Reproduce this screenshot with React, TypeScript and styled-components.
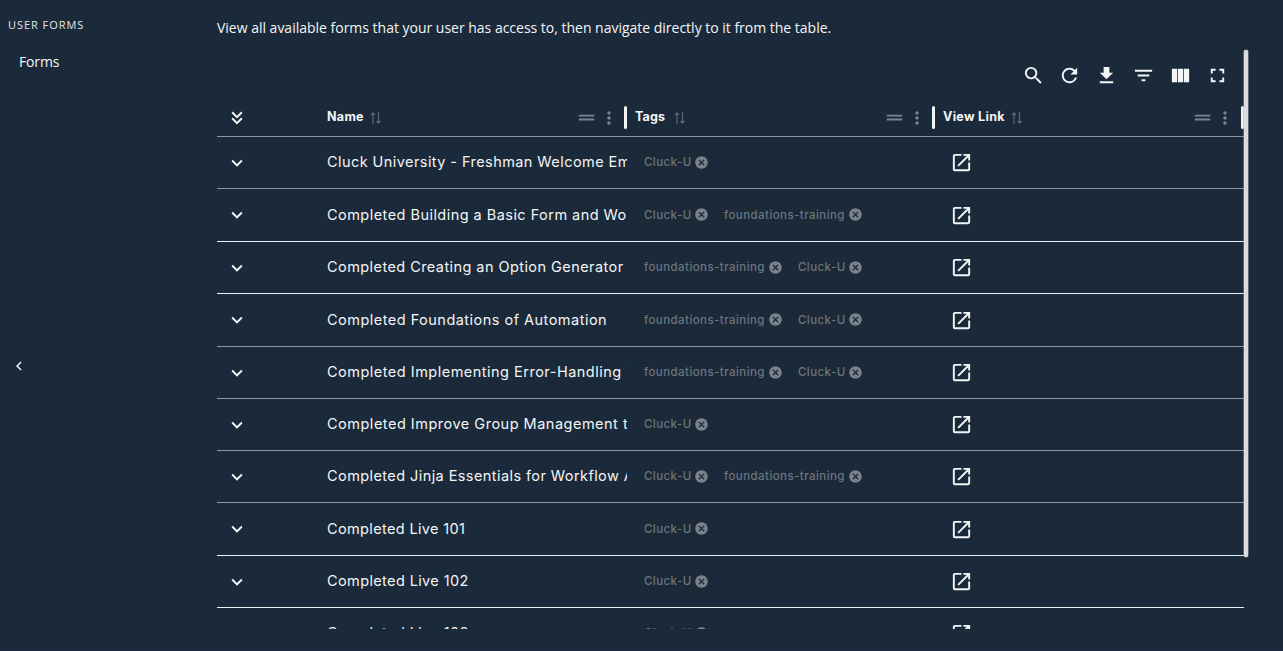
import React from "react";
import styled, { createGlobalStyle } from "styled-components";
import {
  MdSearch, MdRefresh, MdGetApp, MdFilterList, MdFullscreen,
  MdDragHandle, MdMoreVert, MdExpandMore, MdKeyboardDoubleArrowDown,
  MdOpenInNew, MdCancel, MdChevronLeft,
} from "react-icons/md";

const Global = createGlobalStyle`
  * { box-sizing: border-box; }
  body { margin: 0; background: #1b2a3a; color: #f4f5f6; font-family: "Inter", sans-serif; overflow: hidden; }
  svg { display: block; flex: none; }
`;

const Page = styled.div`
  display: flex;
  width: 1283px;
  height: 651px;
  border-bottom: 2px solid #1c2940;
`;

const Sidebar = styled.aside`
  width: 217px;
  display: flex;
  flex-direction: column;
  font-family: "Open Sans", sans-serif;
`;

const SidebarTitle = styled.div`
  margin: 16px 0 0 8px;
  font-size: 11px;
  line-height: 18px;
  letter-spacing: 0.95px;
  color: #e3e5e7;
`;

const SidebarItem = styled.div`
  margin: 17px 0 0 19px;
  font-size: 14px;
  line-height: 22px;
  letter-spacing: -0.15px;
`;

const Collapse = styled.div`
  margin: 284px 0 0 10px;
  font-size: 18px;
`;

const Main = styled.main`
  width: 1032px;
  display: flex;
  flex-direction: column;
`;

const Intro = styled.p`
  margin: 17px 0 0;
  font-family: "Open Sans", sans-serif;
  font-size: 14px;
  line-height: 22px;
  letter-spacing: -0.01px;
  white-space: nowrap;
`;

const Panel = styled.div`
  display: flex;
  margin-top: 10px;
  height: 580px;
`;

const Table = styled.div`
  width: 1027px;
  height: 580px;
  overflow: hidden;
`;

const ScrollThumb = styled.div`
  width: 4px;
  height: 507px;
  margin: 1px 0 0 -0.5px;
  border-radius: 2px;
  background: #dddbdd;
  box-shadow: 0 0 0 0.5px #9aa0a6;
`;

const Toolbar = styled.div`
  height: 50px;
  padding: 2px 15px 0 0;
  display: flex;
  justify-content: flex-end;
  align-items: center;
  gap: 13.9px;
  font-size: 23px;
`;

const grid = `
  display: grid;
  grid-template-columns: 110px 308px 308px 301px;
`;

const HeadRow = styled.div`
  ${grid}
  height: 38px;
  border-bottom: 1px solid #8f979e;
`;

const HeadCell = styled.div`
  display: flex;
  align-items: center;
  font-size: 12.5px;
  font-weight: 700;
  white-space: nowrap;
`;

const Label = styled.span<{ $width: number; $spacing: number }>`
  width: ${(p) => p.$width}px;
  padding-bottom: 2px;
  letter-spacing: ${(p) => p.$spacing}px;
`;

const SortIcon = styled.svg`
  margin-left: 6px;
`;

const HeadTools = styled.div`
  display: flex;
  align-items: center;
  gap: 1px;
  margin-left: auto;
  color: #7b8590;
`;

const Divider = styled.i<{ $last?: boolean }>`
  width: 3px;
  height: 23px;
  margin: 0 ${(p) => (p.$last ? 0 : 8)}px 0 ${(p) => (p.$last ? 6 : 5)}px;
  border-radius: 1.5px;
  background: #f3f3f4;
`;

const Row = styled.div<{ $height: number; $line: string }>`
  ${grid}
  height: ${(p) => p.$height}px;
  border-bottom: 1px solid ${(p) => p.$line};
`;

const ExpandCell = styled.div`
  display: flex;
  align-items: center;
  padding-left: 9px;
  font-size: 22px;
`;

const NameCell = styled.div<{ $spacing: number }>`
  width: 300px;
  align-self: center;
  margin-bottom: 1px;
  overflow: hidden;
  white-space: nowrap;
  font-size: 14.5px;
  line-height: 22px;
  letter-spacing: ${(p) => p.$spacing}px;
`;

const TagCell = styled.div`
  display: flex;
  align-items: center;
  gap: 6px;
  padding: 0 0 1px 2px;
`;

const Tag = styled.span<{ $width: number }>`
  display: flex;
  align-items: center;
  justify-content: space-between;
  width: ${(p) => p.$width}px;
  height: 24px;
  padding: 0 2px 0 7px;
  border-radius: 4px;
  background: #1b2938;
  color: #6b757f;
  font-size: 11.5px;
  font-weight: 500;
  letter-spacing: 0.43px;
  white-space: nowrap;

  svg {
    color: #7a828b;
  }
`;

const LinkCell = styled.div`
  display: flex;
  align-items: center;
  padding-left: 7px;
  font-size: 23px;
`;

const U = "Cluck-U";
const F = "foundations-training";
const SOFT = "#8f979e";
const HARD = "#eef1f3";

const rows = [
  { name: "Cluck University - Freshman Welcome Email", tags: [U], h: 52, line: SOFT, ls: 0.43 },
  { name: "Completed Building a Basic Form and Workflow", tags: [U, F], h: 53, line: HARD, ls: 0.46 },
  { name: "Completed Creating an Option Generator", tags: [F, U], h: 52, line: HARD, ls: 0.43 },
  { name: "Completed Foundations of Automation", tags: [F, U], h: 53, line: SOFT, ls: 0.48 },
  { name: "Completed Implementing Error-Handling Tasks", tags: [F, U], h: 52, line: SOFT, ls: 0.49 },
  { name: "Completed Improve Group Management tasks", tags: [U], h: 52, line: SOFT, ls: 0.5 },
  { name: "Completed Jinja Essentials for Workflow Automation", tags: [U, F], h: 52, line: SOFT, ls: 0.42 },
  { name: "Completed Live 101", tags: [U], h: 53, line: HARD, ls: 0.36 },
  { name: "Completed Live 102", tags: [U], h: 52, line: HARD, ls: 0.38 },
  { name: "Completed Live 103", tags: [U], h: 52, line: HARD, ls: 0.38 },
];

const columns = [
  { label: "Name", width: 37, ls: 0.3 },
  { label: "Tags", width: 33, ls: 0.15 },
  { label: "View Link", width: 62, ls: 0.3 },
];

const Sort = () => (
  <SortIcon width="12" height="14" viewBox="0 0 12 14" fill="none" stroke="#5d6873" strokeWidth="1.2">
    <path d="M3 13V2M1 4L3 1.8L5 4M8.5 1V12M6.5 10L8.5 12.2L10.5 10" />
  </SortIcon>
);

const Columns = () => (
  <svg width="23" height="23" viewBox="0 0 24 24" fill="currentColor">
    <path d="M3 5h5.5v14H3zM9.3 5h5.4v14H9.3zM15.5 5H21v14h-5.5z" />
  </svg>
);

export default function App() {
  return (
    <Page>
      <Global />
      <Sidebar>
        <SidebarTitle>USER FORMS</SidebarTitle>
        <SidebarItem>Forms</SidebarItem>
        <Collapse><MdChevronLeft /></Collapse>
      </Sidebar>
      <Main>
        <Intro>View all available forms that your user has access to, then navigate directly to it from the table.</Intro>
        <Panel>
          <Table>
            <Toolbar>
              <MdSearch /><MdRefresh /><MdGetApp /><MdFilterList /><Columns /><MdFullscreen />
            </Toolbar>
            <HeadRow>
              <ExpandCell><MdKeyboardDoubleArrowDown /></ExpandCell>
              {columns.map((c, i) => (
                <HeadCell key={c.label}>
                  <Label $width={c.width} $spacing={c.ls}>{c.label}</Label>
                  <Sort />
                  <HeadTools><MdDragHandle size={23} /><MdMoreVert size={20} /></HeadTools>
                  <Divider $last={i === columns.length - 1} />
                </HeadCell>
              ))}
            </HeadRow>
            {rows.map((r) => (
              <Row key={r.name} $height={r.h} $line={r.line}>
                <ExpandCell><MdExpandMore /></ExpandCell>
                <NameCell $spacing={r.ls}>{r.name}</NameCell>
                <TagCell>
                  {r.tags.map((t) => (
                    <Tag key={t} $width={t === U ? 74 : 148}>{t}<MdCancel size={15} /></Tag>
                  ))}
                </TagCell>
                <LinkCell><MdOpenInNew /></LinkCell>
              </Row>
            ))}
          </Table>
          <ScrollThumb />
        </Panel>
      </Main>
    </Page>
  );
}
